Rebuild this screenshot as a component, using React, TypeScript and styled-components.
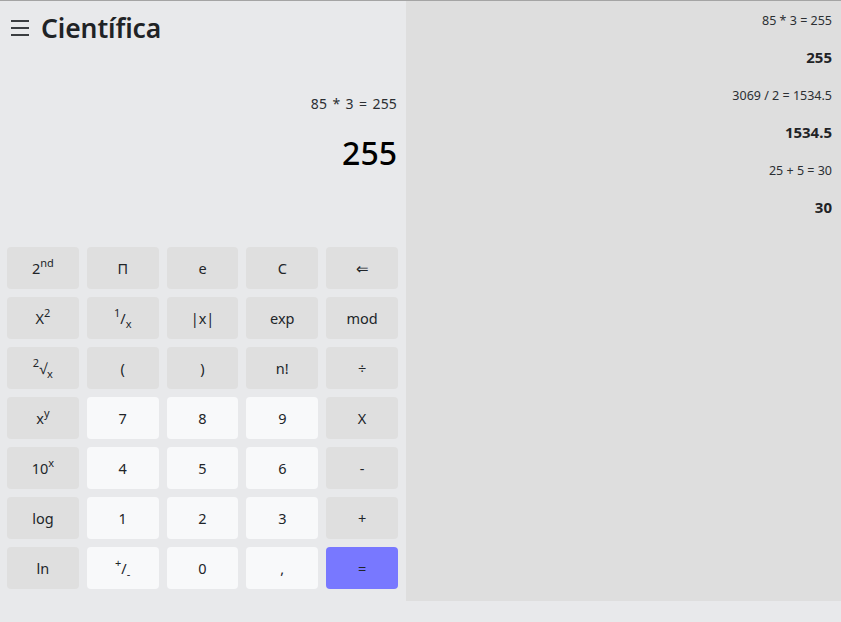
import React from "react";
import styled, { createGlobalStyle } from "styled-components";

const Global = createGlobalStyle`
  html, body { margin: 0; padding: 0; background: #e8e9eb; }
  body { font-family: "Noto Sans", "Open Sans", sans-serif; color: #212529; }
  * { box-sizing: border-box; }
`;

const Frame = styled.div`
  display: flex;
  align-items: flex-start;
  border-top: 1px solid #a4a4a4;
  width: 841px;
`;

const Calc = styled.section`
  width: 406px;
  flex-shrink: 0;
  padding: 0 8px 0 7px;
`;

const Header = styled.header`
  height: 54px;
  display: flex;
  align-items: center;
  gap: 12px;
  padding-left: 4px;
`;

const Burger = styled.div`
  width: 18px;
  display: flex;
  flex-direction: column;
  gap: 5.5px;
  span {
    display: block;
    height: 1.5px;
    background: #3a3d40;
  }
`;

const Title = styled.h1`
  margin: 0;
  font-size: 26.5px;
  font-weight: 600;
  color: #1f2326;
  letter-spacing: -0.1px;
`;

const Display = styled.div`
  height: 192px;
  padding: 39px 1px 0 0;
  display: flex;
  flex-direction: column;
  align-items: flex-end;
`;

const Expr = styled.div`
  font-size: 14px;
  line-height: 20px;
  color: #2b2f33;
  word-spacing: 1.5px;
  letter-spacing: 0.15px;
`;

const Result = styled.div`
  margin-top: 19px;
  font-size: 32px;
  line-height: 40px;
  font-weight: 500;
  color: #000;
`;

const Grid = styled.div`
  display: grid;
  grid-template-columns: repeat(5, 1fr);
  grid-auto-rows: 42px;
  gap: 8px;
`;

type Kind = "fn" | "num" | "eq";

const Key = styled.button<{ $kind: Kind }>`
  border: none;
  border-radius: 4px;
  font-family: inherit;
  font-size: 14.5px;
  color: #212529;
  padding: 0;
  display: flex;
  align-items: center;
  justify-content: center;
  background: ${(p) =>
    p.$kind === "num" ? "#f8f9fa" : p.$kind === "eq" ? "#7878ff" : "#dfdfdf"};
  sup, sub { font-size: 11px; line-height: 0; }
  sup { position: relative; top: -1px; }
`;

const History = styled.aside`
  flex: 1;
  height: 600px;
  background: #dedede;
  padding: 1px 9px 0 0;
  display: flex;
  flex-direction: column;
  align-items: flex-end;
`;

const HExpr = styled.div`
  font-size: 12.5px;
  line-height: 37.4px;
  color: #2b2f33;
`;

const HRes = styled.div`
  font-size: 15px;
  line-height: 37.4px;
  font-weight: 700;
  color: #1f2326;
`;

const keys: { label: React.ReactNode; kind: Kind }[] = [
  { label: <>2<sup>nd</sup></>, kind: "fn" },
  { label: "Π", kind: "fn" },
  { label: "e", kind: "fn" },
  { label: "C", kind: "fn" },
  { label: "⇐", kind: "fn" },
  { label: <>X<sup>2</sup></>, kind: "fn" },
  { label: <><sup>1</sup>/<sub>x</sub></>, kind: "fn" },
  { label: "|x|", kind: "fn" },
  { label: "exp", kind: "fn" },
  { label: "mod", kind: "fn" },
  { label: <><sup>2</sup>√<sub>x</sub></>, kind: "fn" },
  { label: "(", kind: "fn" },
  { label: ")", kind: "fn" },
  { label: "n!", kind: "fn" },
  { label: "÷", kind: "fn" },
  { label: <>x<sup>y</sup></>, kind: "fn" },
  { label: "7", kind: "num" },
  { label: "8", kind: "num" },
  { label: "9", kind: "num" },
  { label: "X", kind: "fn" },
  { label: <>10<sup>x</sup></>, kind: "fn" },
  { label: "4", kind: "num" },
  { label: "5", kind: "num" },
  { label: "6", kind: "num" },
  { label: "-", kind: "fn" },
  { label: "log", kind: "fn" },
  { label: "1", kind: "num" },
  { label: "2", kind: "num" },
  { label: "3", kind: "num" },
  { label: "+", kind: "fn" },
  { label: "ln", kind: "fn" },
  { label: <><sup>+</sup>/<sub>-</sub></>, kind: "num" },
  { label: "0", kind: "num" },
  { label: ",", kind: "num" },
  { label: "=", kind: "eq" },
];

const history = [
  { expr: "85 * 3 = 255", res: "255" },
  { expr: "3069 / 2 = 1534.5", res: "1534.5" },
  { expr: "25 + 5 = 30", res: "30" },
];

export default function App() {
  return (
    <>
      <Global />
      <Frame>
        <Calc>
          <Header>
            <Burger>
              <span />
              <span />
              <span />
            </Burger>
            <Title>Científica</Title>
          </Header>
          <Display>
            <Expr>85 * 3 = 255</Expr>
            <Result>255</Result>
          </Display>
          <Grid>
            {keys.map((k, i) => (
              <Key key={i} $kind={k.kind}>
                <span>{k.label}</span>
              </Key>
            ))}
          </Grid>
        </Calc>
        <History>
          {history.map((h, i) => (
            <React.Fragment key={i}>
              <HExpr>{h.expr}</HExpr>
              <HRes>{h.res}</HRes>
            </React.Fragment>
          ))}
        </History>
      </Frame>
    </>
  );
}
